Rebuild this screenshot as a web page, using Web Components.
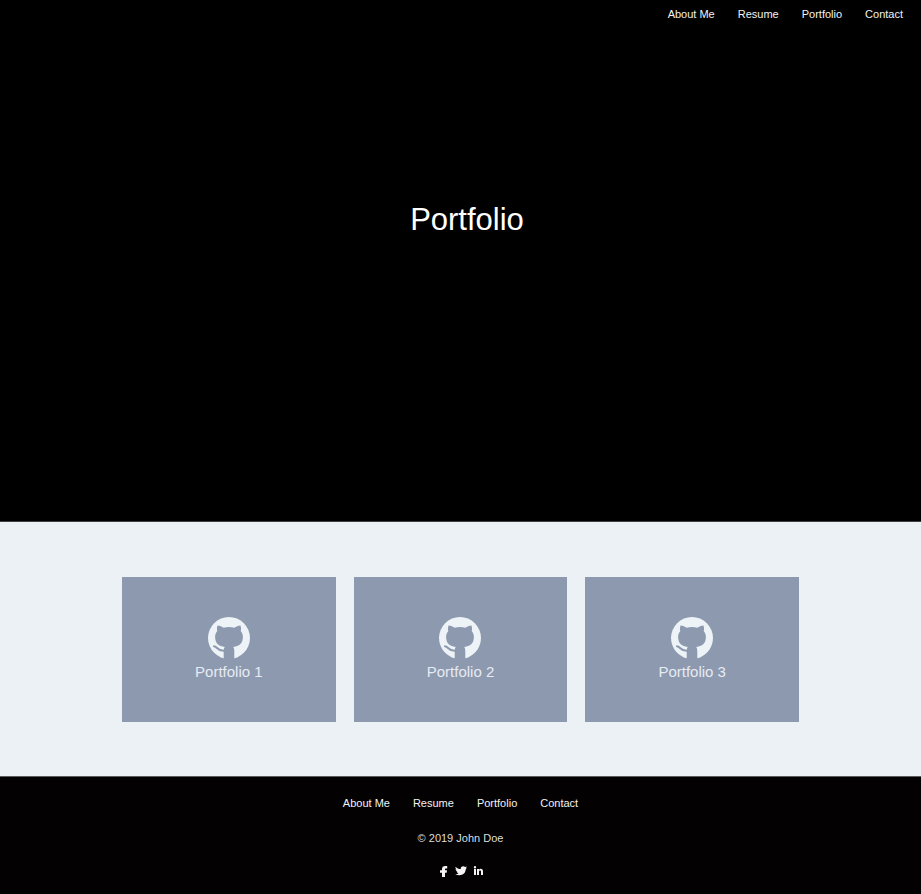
<!DOCTYPE html>
<html lang="en">
<head>
<meta charset="utf-8">
<meta name="viewport" content="width=device-width, initial-scale=1">
<title>Portfolio</title>
<style>
body { margin: 0; background: #030102; color: #fff; font-family: "Liberation Sans", Arial, sans-serif; font-size: 11px; line-height: 16px; }
</style>
</head>
<body>
<page-hero heading="Portfolio"><site-nav slot="nav" label="Main"></site-nav></page-hero>
<card-grid>
  <project-card>Portfolio 1</project-card>
  <project-card>Portfolio 2</project-card>
  <project-card>Portfolio 3</project-card>
</card-grid>
<page-footer><site-nav slot="nav" label="Footer"></site-nav>© 2019 John Doe</page-footer>
<script>
class Base extends HTMLElement {
  connectedCallback() {
    if (!this.shadowRoot) this.attachShadow({ mode: "open" }).innerHTML = this.render();
  }
}

customElements.define("site-nav", class extends Base {
  render() {
    return `<style>
      :host { display: block; }
      nav { display: flex; flex-wrap: wrap; gap: 0 23px; }
      a { color: #f2f2f2; text-decoration: none; }
      a:hover { text-decoration: underline; }
    </style>
    <nav aria-label="${this.getAttribute("label")}">
      <a href="#about">About Me</a><a href="#resume">Resume</a><a href="#portfolio">Portfolio</a><a href="#contact">Contact</a>
    </nav>`;
  }
});

customElements.define("page-hero", class extends Base {
  render() {
    return `<style>
      :host { display: block; background: #000; border-bottom: 1px solid #3c4040; }
      header { display: flex; justify-content: flex-end; padding: 6px 18px; }
      h1 { margin: 0; padding: 174px 0 283px 13px; text-align: center; font-size: 31px; line-height: 36px; font-weight: 400; }
    </style>
    <header><slot name="nav"></slot></header>
    <h1>${this.getAttribute("heading")}</h1>`;
  }
});

customElements.define("card-grid", class extends Base {
  render() {
    return `<style>
      :host { display: block; background: #ebf1f4; border-bottom: 1px solid #5a5c5d; }
      main { display: grid; grid-template-columns: repeat(3, 1fr); gap: 18px; padding: 55px 122px 54px; }
      @media (max-width: 720px) { main { grid-template-columns: 1fr; padding: 55px 24px; } }
    </style>
    <main><slot></slot></main>`;
  }
});

customElements.define("project-card", class extends Base {
  render() {
    return `<style>
      :host { display: block; background: #8d99af; }
      a { display: flex; flex-direction: column; align-items: center; gap: 4px; padding: 40px 12px 41px; color: #e6ebf3; text-decoration: none; font-size: 15px; line-height: 18px; }
      svg { width: 42px; height: 42px; }
      .disc { fill: #edf3f7; }
      .cat { fill: #8d99af; }
      .tail { fill: none; stroke: #8d99af; stroke-width: 2; stroke-linecap: round; }
    </style>
    <a href="#project">
      <svg viewBox="0 0 42 42" aria-hidden="true">
        <circle class="disc" cx="21" cy="21" r="21"/>
        <path class="cat" d="M9.600 8.400C11.800 8.400 14 9.700 15.600 10.700C19 9.900 23 9.900 26.400 10.700C28 9.700 30.200 8.400 32.400 8.400C33.200 10.300 33.200 12.300 32.700 14C34.300 15.800 35 18 34.900 20.500C34.600 26.500 31.200 29.100 25.300 30C26.100 31.200 26.300 32.500 26.300 34V42H15.700V34C15.700 32.500 15.900 31.200 16.700 30C10.800 29.100 7.400 26.500 7.100 20.500C7 18 7.700 15.800 9.300 14C8.800 12.300 8.800 10.300 9.600 8.400Z"/>
        <path class="tail" d="M6 29.300C9.500 29.500 9 34.300 16.500 33.700"/>
      </svg>
      <span><slot></slot></span>
    </a>`;
  }
});

customElements.define("page-footer", class extends Base {
  render() {
    return `<style>
      :host { display: block; background: #030102; }
      footer { display: flex; flex-direction: column; align-items: center; gap: 19px; padding: 18px 16px; }
      p { margin: 0; color: #dedede; }
      .social { display: flex; gap: 5px; }
      .social a { display: flex; width: 12px; height: 12px; }
      .social svg { width: 12px; height: 12px; fill: #f4f4f4; }
    </style>
    <footer>
      <slot name="nav"></slot>
      <p><slot></slot></p>
      <div class="social">
        <a href="#facebook" aria-label="Facebook"><svg viewBox="0 0 12 12"><path d="M4 12V7.800H2V5.300H4V4.200C4 2 5.200 1 7.200 1h2v2.500H8c-.8 0-1 .3-1 .9v.9h2L8.700 7.800H7V12z"/></svg></a>
        <a href="#twitter" aria-label="Twitter"><svg viewBox="0 0 12 12"><path d="M.6 1.700C2 3.200 3.800 4 5.700 4C5.500 2.300 6.700 1.200 8.200 1.200C9 1.200 9.600 1.500 10.100 2L11.800 1.500L11 2.900L12 2.800L10.800 4.100C10.700 7.900 8 10.300 4.600 10.300C3 10.300 1.600 9.900.3 9.100C1.700 9.200 2.700 8.900 3.600 8.200C2.500 8 1.800 7.400 1.500 6.500H2.400C1.200 6 .6 5.200.6 4.100L1.500 4.400C.6 3.600.3 2.700.6 1.700Z"/></svg></a>
        <a href="#linkedin" aria-label="LinkedIn"><svg viewBox="0 0 12 12"><path d="M2 4h2v6H2zM3 1a1.200 1.200 0 1 1 0 2.400A1.200 1.200 0 0 1 3 1zM5 4h2v.8C7.400 4.200 8 3.800 8.700 3.800c1.600 0 2.300 1 2.300 2.600V10H9V6.800c0-.8-.3-1.300-1-1.300s-1 .5-1 1.300V10H5z"/></svg></a>
      </div>
    </footer>`;
  }
});
</script>
</body>
</html>
